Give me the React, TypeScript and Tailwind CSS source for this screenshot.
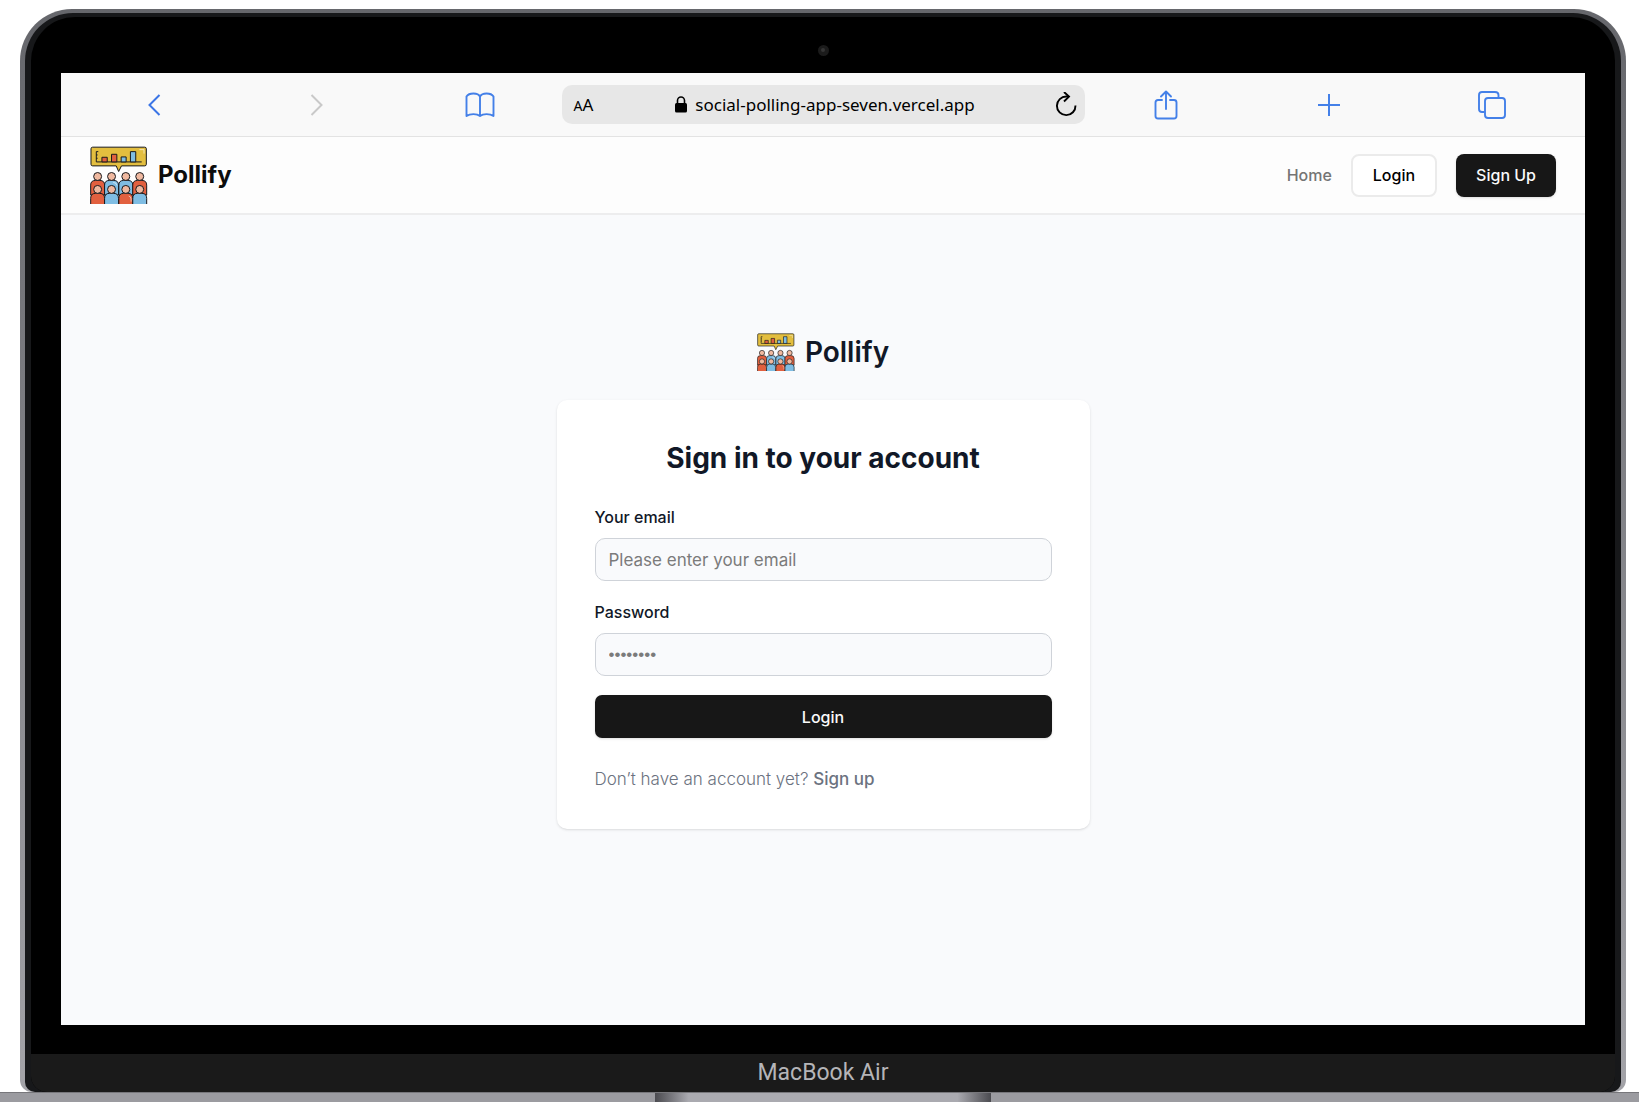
import React from "react";

function PollifyLogo({ className }: { className: string }) {
  const red = "#e2603f";
  const blue = "#7fbde3";
  const skin = "#f0b9a0";
  const back = [
    { x: 54, fill: red },
    { x: 96, fill: blue },
    { x: 139, fill: blue },
    { x: 181, fill: red },
  ];
  const front = [
    { x: 54, fill: red },
    { x: 96, fill: blue },
    { x: 139, fill: red },
    { x: 181, fill: blue },
  ];
  return (
    <svg viewBox="31 32 175 175" className={className} aria-hidden="true">
      <g stroke="#17181c" strokeWidth="3" strokeLinejoin="round">
        <path
          d="M39 35.500H196Q201 35.500 201 40.500V87Q201 92 196 92H126L117.500 109L110 92H39Q34 92 34 87V40.500Q34 35.500 39 35.500Z"
          fill="#e3be3f"
        />
        <path d="M56 49H50V80H187M50 59H54M50 69H54" fill="none" />
        <path d="M67 80V66H83V80Z" fill={red} />
        <path d="M96 80V57H112V80Z" fill={red} />
        <path d="M125 80V65H140V80Z" fill={blue} />
        <path d="M153 80V49H169V80Z" fill={blue} />
        {back.map((p) => (
          <g key={p.x}>
            <path
              d={`M${p.x - 21} 180V150Q${p.x - 21} 136 ${p.x - 7} 136H${p.x + 7}Q${p.x + 21} 136 ${p.x + 21} 150V180Z`}
              fill={p.fill}
            />
            <circle cx={p.x} cy="124" r="12" fill={skin} />
          </g>
        ))}
        {front.map((p) => (
          <g key={p.x}>
            <path
              d={`M${p.x - 21} 208V190Q${p.x - 21} 175 ${p.x - 7} 175H${p.x + 7}Q${p.x + 21} 175 ${p.x + 21} 190V208`}
              fill={p.fill}
            />
            <circle cx={p.x} cy="163" r="12" fill={skin} />
          </g>
        ))}
      </g>
      <path d="M180 43H194V55M148 183Q155 184 155 192V200M101 142Q112 142 112 151" fill="none" stroke="#fff" strokeOpacity="0.6" strokeWidth="3" />
    </svg>
  );
}

const toolButton = "flex items-center justify-center text-[#4480e8]";

function BrowserBar() {
  return (
    <div className="flex h-16 items-center border-b border-[#e3e3e3] bg-[#f9f9f9] px-3">
      <div className="grid flex-1 grid-cols-3">
        <button aria-label="Back" className={toolButton}>
          <svg width="14" height="24" viewBox="0 0 14 24" fill="none" stroke="#3b75e6" strokeWidth="2">
            <path d="M12.500 2L2.500 12L12.500 22" />
          </svg>
        </button>
        <button aria-label="Forward" className={toolButton}>
          <svg width="14" height="24" viewBox="0 0 14 24" fill="none" stroke="#c9c9c9" strokeWidth="2">
            <path d="M1.500 2L11.500 12L1.500 22" />
          </svg>
        </button>
        <button aria-label="Bookmarks" className={toolButton}>
          <svg width="30" height="26" viewBox="0 0 30 26" fill="none" stroke="currentColor" strokeWidth="1.900" strokeLinejoin="round">
            <path d="M15 4.500C13 .500 4 .500 1.500 4.500V24C5 21.500 12 21.500 15 24C18 21.500 25 21.500 28.500 24V4.500C26 .500 17 .500 15 4.500V24" />
          </svg>
        </button>
      </div>
      <div className="flex h-[39px] w-[523px] items-center justify-between rounded-[10px] bg-[#e7e7e7] pr-2 pl-3 font-['Noto_Sans',sans-serif] text-black">
        <button aria-label="Text size" className="flex w-7 items-baseline">
          <span className="text-sm">A</span>
          <span className="text-[17px]">A</span>
        </button>
        <div className="flex items-center gap-2">
          <svg width="12" height="17" viewBox="0 0 12 17" aria-hidden="true">
            <rect x="0" y="7" width="12" height="9.500" rx="1.500" />
            <path d="M2.500 8V4.500a3.500 3.500 0 0 1 7 0V8" fill="none" stroke="#000" strokeWidth="1.600" />
          </svg>
          <span className="text-[17px]">social-polling-app-seven.vercel.app</span>
        </div>
        <button aria-label="Reload" className="flex w-7 justify-end">
          <svg width="22" height="26" viewBox="0 0 22 26" fill="none" stroke="#000" strokeWidth="1.900">
            <path d="M13.500 4.500H11.500A9.300 9.300 0 1 0 20.500 13.500" />
            <path d="M9 0L14 4.600L9 9.500" />
          </svg>
        </button>
      </div>
      <div className="grid flex-1 grid-cols-3">
        <button aria-label="Share" className={toolButton}>
          <svg width="24" height="30" viewBox="0 0 24 30" fill="none" stroke="currentColor" strokeWidth="1.900" strokeLinecap="round" strokeLinejoin="round">
            <path d="M8 10H4Q1.500 10 1.500 12.500V26Q1.500 28.500 4 28.500H20Q22.500 28.500 22.500 26V12.500Q22.500 10 20 10H16" />
            <path d="M12 19V1.500M7 6.500L12 1.500L17 6.500" />
          </svg>
        </button>
        <button aria-label="New tab" className={toolButton}>
          <svg width="22" height="22" viewBox="0 0 22 22" stroke="currentColor" strokeWidth="2">
            <path d="M11 0V22M0 11H22" />
          </svg>
        </button>
        <button aria-label="Tabs" className={toolButton}>
          <svg width="28" height="28" viewBox="0 0 28 28" fill="none" stroke="currentColor" strokeWidth="1.900">
            <path d="M6.500 21H4Q1 21 1 18V4Q1 1 4 1H17Q20.500 1 20.500 4V6.500" />
            <rect x="7" y="7" width="20" height="20" rx="3" />
          </svg>
        </button>
      </div>
    </div>
  );
}

function SiteHeader() {
  return (
    <header className="flex h-[78px] items-center justify-between border-b-2 border-[#ededee] bg-[#fdfdfd] px-[29px]">
      <a href="#home" className="flex items-center gap-[10px]">
        <PollifyLogo className="size-[58px]" />
        <span className="text-2xl font-bold text-[#0c0c0c]">Pollify</span>
      </a>
      <nav className="flex items-center gap-[19px] text-base font-medium">
        <a href="#home" className="text-[#747474]">Home</a>
        <button className="h-[43px] rounded-lg border-2 border-[#ebebeb] bg-white px-5 text-black">Login</button>
        <button className="h-[43px] rounded-lg bg-[#171717] px-5 text-[#fafafa] shadow-sm">Sign Up</button>
      </nav>
    </header>
  );
}

const labelClass = "block text-base leading-6 font-medium text-[#111827]";
const fieldClass =
  "mt-[9px] h-[43px] w-full rounded-[10px] border border-[#cfd3d9] bg-[#f9fafc] px-[13px] text-[17px] text-gray-900 placeholder:text-[#7b7b7b]";

function SignIn() {
  return (
    <main className="flex flex-1 flex-col items-center bg-[#f9fafc] pt-[115px]">
      <a href="#home" className="flex h-11 items-center gap-[10px] text-[28px] font-semibold text-[#111827]">
        <PollifyLogo className="size-[38px]" />
        Pollify
      </a>
      <section className="mt-[26px] w-[533px] max-w-full rounded-[10px] bg-white px-[38px] pt-[38px] pb-9 shadow">
        <h1 className="text-center text-[28px] leading-10 font-bold text-[#111827]">Sign in to your account</h1>
        <form className="mt-[27px]" onSubmit={(e) => e.preventDefault()}>
          <label htmlFor="email" className={labelClass}>Your email</label>
          <input id="email" type="email" placeholder="Please enter your email" className={fieldClass} />
          <label htmlFor="password" className={`mt-[19px] ${labelClass}`}>Password</label>
          <input
            id="password"
            type="password"
            placeholder="••••••••"
            className={`font-['Liberation_Sans',sans-serif] ${fieldClass}`}
          />
          <button type="submit" className="mt-[19px] block h-[43px] w-full rounded-[7px] bg-[#171717] text-base font-medium text-[#fafafa] shadow-sm">
            Login
          </button>
          <p className="mt-[27px] text-[17px] leading-7 font-light text-[#6b7280]">
            Don’t have an account yet? <a href="#signup" className="font-medium">Sign up</a>
          </p>
        </form>
      </section>
    </main>
  );
}

export default function App() {
  return (
    <div className="flex min-h-screen flex-col bg-white pt-[9px] font-['Inter',sans-serif]">
      <div className="mr-[13px] ml-5 flex flex-1 flex-col rounded-t-[52px] rounded-b-[12px] bg-linear-to-b from-[#66676c] to-[#a3a3a8] px-[5px] pt-1">
        <div className="flex flex-1 flex-col rounded-t-[48px] rounded-b-[10px] bg-[#17181a] px-[6px] pt-1">
          <div className="flex flex-1 flex-col overflow-hidden rounded-t-[44px] rounded-b-[16px] bg-black">
            <div className="flex h-14 items-center justify-center pt-[10px]">
              <div className="flex size-[11px] items-center justify-center rounded-full bg-[#1b1b1b]">
                <div className="size-1 rounded-full bg-[#353535]" />
              </div>
            </div>
            <div className="mx-[30px] flex flex-1 flex-col">
              <BrowserBar />
              <SiteHeader />
              <SignIn />
            </div>
            <div className="mt-[29px] flex h-[38px] items-center justify-center bg-[#1a1a1a] font-['Roboto',sans-serif] text-[23px] text-[#b5b5b8]">
              MacBook Air
            </div>
          </div>
        </div>
      </div>
      <div className="flex h-[10px] justify-center border-t border-[#77777b] bg-[#9b9ba0] pl-[7px]">
        <div className="w-[336px] bg-linear-to-r from-[#4b4b50] via-[#aaaab0] via-10% to-[#aaaab0]">
          <div className="h-full bg-linear-to-l from-[#4b4b50] to-transparent to-10%" />
        </div>
      </div>
    </div>
  );
}
